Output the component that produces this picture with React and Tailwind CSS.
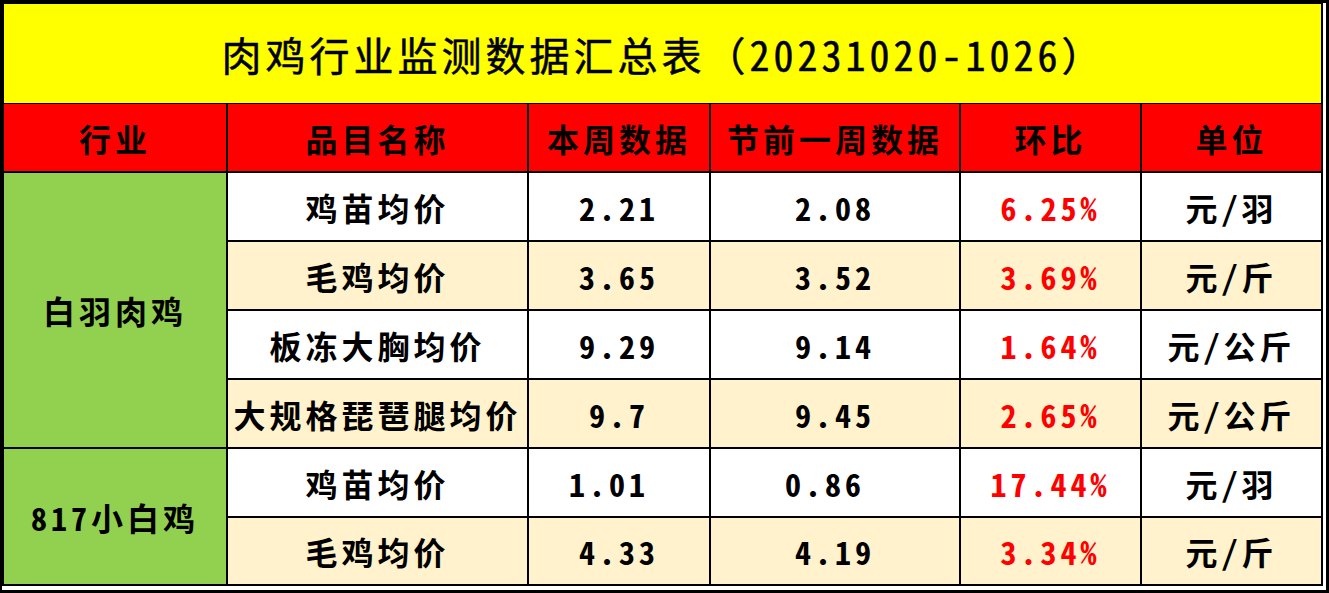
import React from 'react';

// 肉鸡行业监测数据汇总表
const rows = [
  { group: '白羽肉鸡', span: 4, name: '鸡苗均价', cur: '2.21', prev: '2.08', ratio: '6.25%', unit: '元/羽' },
  { name: '毛鸡均价', cur: '3.65', prev: '3.52', ratio: '3.69%', unit: '元/斤' },
  { name: '板冻大胸均价', cur: '9.29', prev: '9.14', ratio: '1.64%', unit: '元/公斤' },
  { name: '大规格琵琶腿均价', cur: '9.7', prev: '9.45', ratio: '2.65%', unit: '元/公斤' },
  { group: '817小白鸡', span: 2, name: '鸡苗均价', cur: '1.01', prev: '0.86', ratio: '17.44%', unit: '元/羽', pad: true },
  { name: '毛鸡均价', cur: '4.33', prev: '4.19', ratio: '3.34%', unit: '元/斤' },
];

const headers = ['行业', '品目名称', '本周数据', '节前一周数据', '环比', '单位'];

const font = {
  fontFamily: '"Noto Sans Mono CJK SC", "Noto Sans CJK SC", sans-serif',
};

const Cell = ({ className = '', red = false, children }) => (
  <div
    className={`flex items-center justify-center text-[32px] font-bold tracking-[4px] leading-none ${
      red ? 'text-[#ff0000]' : 'text-black'
    } ${className}`}
  >
    {children}
  </div>
);

export default function App() {
  return (
    <div className="w-[1329px] h-[593px] bg-black pt-[3px] pl-[2px] pr-[3px] pb-[3px]" style={font}>
      <div className="w-full h-full bg-white pr-[3px] pb-[3px]">
        <div className="bg-black border-t border-l-2 border-r-2 border-b-2 border-black">
          {/* title */}
          <div className="h-[100px] bg-[#ffff00] border-b border-black flex items-center justify-center pl-[2px]">
            <span className="text-[40px] tracking-[4px] leading-none text-black [-webkit-text-stroke:0.5px_black]">
              肉鸡行业监测数据汇总表（20231020-1026）
            </span>
          </div>

          <div className="grid grid-cols-[222px_299px_180px_248px_179px_179px] grid-rows-[67px_67px_67px_67px_67px_67px_66px] gap-[2px]">
            {headers.map(h => (
              <Cell key={h} className="bg-[#ff0000]">{h}</Cell>
            ))}

            {rows.map((r, i) => {
              const bg = i % 2 === 0 ? 'bg-white' : 'bg-[#fff2cc]';
              return (
                <React.Fragment key={i}>
                  {r.group && (
                    <Cell className={`bg-[#92d050] ${r.span === 4 ? 'row-span-4' : 'row-span-2'}`}>{r.group}</Cell>
                  )}
                  <Cell className={bg}>{r.name}</Cell>
                  <Cell className={`${bg} ${r.pad ? 'pr-[20px]' : ''}`}>{r.cur}</Cell>
                  <Cell className={`${bg} ${r.pad ? 'pr-[20px]' : ''}`}>{r.prev}</Cell>
                  <Cell className={bg} red>{r.ratio}</Cell>
                  <Cell className={bg}>{r.unit}</Cell>
                </React.Fragment>
              );
            })}
          </div>
        </div>
      </div>
    </div>
  );
}
